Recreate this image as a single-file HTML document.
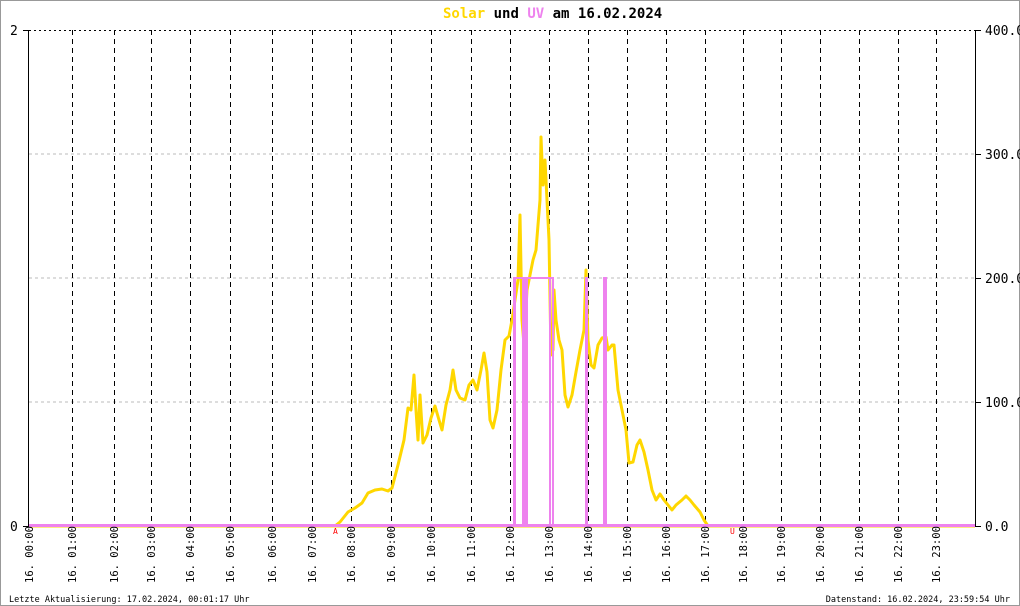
<!DOCTYPE html>
<html><head><meta charset="utf-8"><style>
html,body{margin:0;padding:0;background:#fff}
svg{display:block}
text{font-family:"DejaVu Sans Mono","Liberation Mono",monospace}
</style></head><body>
<svg width="1020" height="606" viewBox="0 0 1020 606" xmlns="http://www.w3.org/2000/svg">
<rect x="0.5" y="0.5" width="1019" height="605" fill="#fff" stroke="#999"/>
<text x="443" y="18" font-size="14" font-weight="bold"><tspan fill="#ffd700">Solar</tspan><tspan fill="#000"> und </tspan><tspan fill="#ee82ee">UV</tspan><tspan fill="#000"> am 16.02.2024</tspan></text>
<g stroke="#bbb" stroke-dasharray="3,3">
<line x1="29" y1="154" x2="975" y2="154"/><line x1="29" y1="278" x2="975" y2="278"/><line x1="29" y1="402" x2="975" y2="402"/>
</g>
<line x1="29" y1="30.5" x2="975" y2="30.5" stroke="#000" stroke-dasharray="2,3"/>
<g stroke="#000" stroke-dasharray="5,4">
<line x1="72.5" y1="30" x2="72.5" y2="526"/><line x1="114.5" y1="30" x2="114.5" y2="526"/><line x1="151.5" y1="30" x2="151.5" y2="526"/><line x1="190.5" y1="30" x2="190.5" y2="526"/><line x1="230.5" y1="30" x2="230.5" y2="526"/><line x1="272.5" y1="30" x2="272.5" y2="526"/><line x1="312.5" y1="30" x2="312.5" y2="526"/><line x1="351.5" y1="30" x2="351.5" y2="526"/><line x1="391.5" y1="30" x2="391.5" y2="526"/><line x1="431.5" y1="30" x2="431.5" y2="526"/><line x1="471.5" y1="30" x2="471.5" y2="526"/><line x1="510.5" y1="30" x2="510.5" y2="526"/><line x1="549.5" y1="30" x2="549.5" y2="526"/><line x1="588.5" y1="30" x2="588.5" y2="526"/><line x1="627.5" y1="30" x2="627.5" y2="526"/><line x1="666.5" y1="30" x2="666.5" y2="526"/><line x1="705.5" y1="30" x2="705.5" y2="526"/><line x1="743.5" y1="30" x2="743.5" y2="526"/><line x1="781.5" y1="30" x2="781.5" y2="526"/><line x1="820.5" y1="30" x2="820.5" y2="526"/><line x1="859.5" y1="30" x2="859.5" y2="526"/><line x1="898.5" y1="30" x2="898.5" y2="526"/><line x1="936.5" y1="30" x2="936.5" y2="526"/>
</g>
<g stroke="#000">
<line x1="28.5" y1="30" x2="28.5" y2="527"/><line x1="975.5" y1="30" x2="975.5" y2="527"/>
<line x1="23" y1="30.5" x2="29" y2="30.5"/><line x1="23" y1="526.5" x2="29" y2="526.5"/>
<line x1="975" y1="30.5" x2="981" y2="30.5"/><line x1="975" y1="154.5" x2="981" y2="154.5"/><line x1="975" y1="278.5" x2="981" y2="278.5"/><line x1="975" y1="402.5" x2="981" y2="402.5"/><line x1="975" y1="526.5" x2="981" y2="526.5"/>
</g>
<g font-size="13" fill="#000">
<text x="10" y="35">2</text><text x="10" y="531">0</text>
<text x="985" y="35">400.0</text><text x="985" y="159">300.0</text><text x="985" y="283">200.0</text><text x="985" y="407">100.0</text><text x="985" y="531">0.0</text>
</g>
<line x1="29" y1="526.5" x2="975" y2="526.5" stroke="#ffd700" stroke-width="2"/>
<polyline fill="none" stroke="#ffd700" stroke-width="3" stroke-linejoin="round" points="335,526 340,522 348,512 355,508 362,503 368,493 375,490 382,489 388,491 392,488 398,465 404,440 408,408 411,410 414,375 416,410 418,440 420,395 423,443 427,435 431,418 435,406 439,420 442,430 446,405 450,390 453,370 456,390 460,398 465,400 469,385 473,380 477,390 481,370 484,353 487,372 490,420 493,428 497,410 501,370 505,340 509,336 512,320 515,300 518,280 520,215 522,320 524,345 527,290 529,280 533,260 536,250 540,200 541,137 543,185 545,160 547,200 549,240 551,355 553,350 554,290 556,320 559,340 562,350 565,395 568,407 572,395 576,372 580,350 584,330 586,270 588,340 591,365 594,368 598,345 602,338 606,337 608,350 612,345 614,345 618,390 622,410 626,430 629,463 633,462 637,445 640,440 644,452 648,470 652,490 656,500 660,494 664,500 668,505 672,510 676,505 682,500 686,496 690,500 694,505 700,512 704,520 708,526"/>
<g fill="#ee82ee">
<rect x="29" y="524" width="946" height="3"/>
<rect x="513" y="277" width="3" height="249"/>
<rect x="513" y="277" width="41" height="2"/>
<rect x="522" y="277" width="6" height="249"/>
<rect x="549" y="277" width="2" height="249"/>
<rect x="552" y="277" width="2" height="249"/>
<rect x="585" y="277" width="3" height="249"/>
<rect x="603" y="277" width="4" height="249"/>
</g>
<text x="333" y="534" font-size="8" fill="#f00">A</text>
<text x="730" y="534" font-size="8" fill="#f00">U</text>
<g font-size="10.5" fill="#000">
<text transform="translate(33,583) rotate(-90)">16. 00:00</text>
<text transform="translate(76,583) rotate(-90)">16. 01:00</text>
<text transform="translate(118,583) rotate(-90)">16. 02:00</text>
<text transform="translate(155,583) rotate(-90)">16. 03:00</text>
<text transform="translate(194,583) rotate(-90)">16. 04:00</text>
<text transform="translate(234,583) rotate(-90)">16. 05:00</text>
<text transform="translate(276,583) rotate(-90)">16. 06:00</text>
<text transform="translate(316,583) rotate(-90)">16. 07:00</text>
<text transform="translate(355,583) rotate(-90)">16. 08:00</text>
<text transform="translate(395,583) rotate(-90)">16. 09:00</text>
<text transform="translate(435,583) rotate(-90)">16. 10:00</text>
<text transform="translate(475,583) rotate(-90)">16. 11:00</text>
<text transform="translate(514,583) rotate(-90)">16. 12:00</text>
<text transform="translate(553,583) rotate(-90)">16. 13:00</text>
<text transform="translate(592,583) rotate(-90)">16. 14:00</text>
<text transform="translate(631,583) rotate(-90)">16. 15:00</text>
<text transform="translate(670,583) rotate(-90)">16. 16:00</text>
<text transform="translate(709,583) rotate(-90)">16. 17:00</text>
<text transform="translate(747,583) rotate(-90)">16. 18:00</text>
<text transform="translate(785,583) rotate(-90)">16. 19:00</text>
<text transform="translate(824,583) rotate(-90)">16. 20:00</text>
<text transform="translate(863,583) rotate(-90)">16. 21:00</text>
<text transform="translate(902,583) rotate(-90)">16. 22:00</text>
<text transform="translate(940,583) rotate(-90)">16. 23:00</text>
</g>
<text x="9" y="602" font-size="8.5" fill="#000">Letzte Aktualisierung: 17.02.2024, 00:01:17 Uhr</text>
<text x="1010" y="602" font-size="8.5" fill="#000" text-anchor="end">Datenstand: 16.02.2024, 23:59:54 Uhr</text>
</svg>
</body></html>
